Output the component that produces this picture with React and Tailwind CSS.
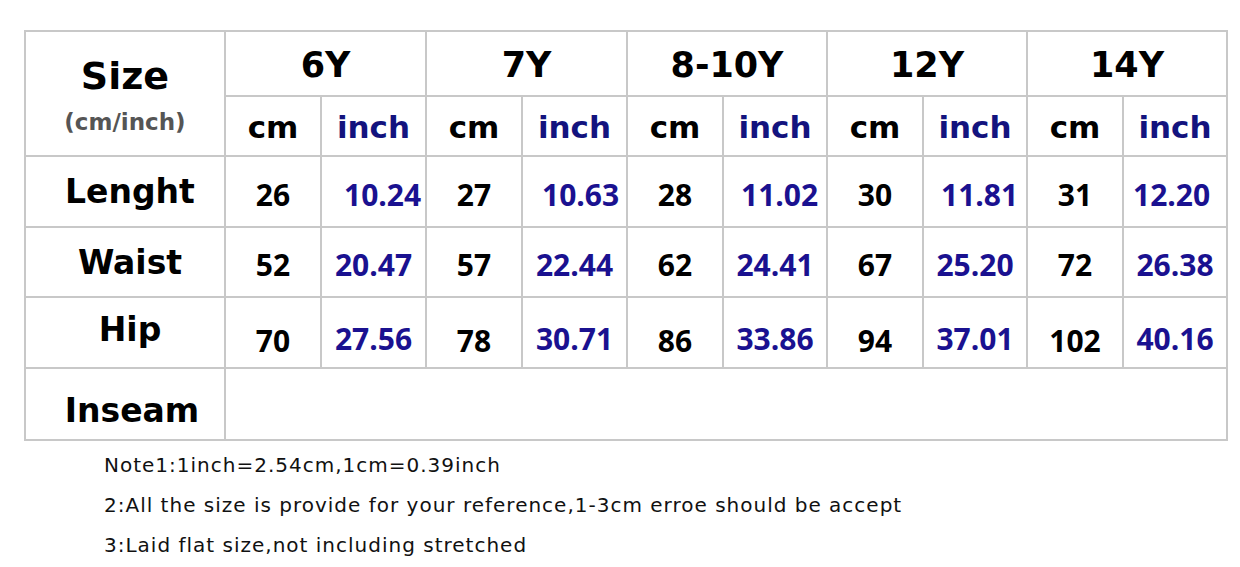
import React from 'react';

const sizes = [
  { label: '6Y', rows: [['26', '10.24'], ['52', '20.47'], ['70', '27.56']] },
  { label: '7Y', rows: [['27', '10.63'], ['57', '22.44'], ['78', '30.71']] },
  { label: '8-10Y', rows: [['28', '11.02'], ['62', '24.41'], ['86', '33.86']] },
  { label: '12Y', rows: [['30', '11.81'], ['67', '25.20'], ['94', '37.01']] },
  { label: '14Y', rows: [['31', '12.20'], ['72', '26.38'], ['102', '40.16']] },
];

const labels = ['Lenght', 'Waist', 'Hip'];

// first row inch values sit a bit to the right in the source picture
const firstRowShift = ['pl-[22px]', 'pl-[19px]', 'pl-[17px]', 'pl-[17px]', 'pl-[9px]'];

const comic = "font-['DejaVu_Sans',sans-serif]";
const num = "font-['Open_Sans',sans-serif] font-bold text-[30px]";

const Cell = ({ className = '', children }) => (
  <div className={`bg-white flex items-center justify-center ${className}`}>{children}</div>
);

export default function App() {
  return (
    <div className="w-[1240px] h-[567px] bg-white overflow-hidden pt-[30px] pl-[24px]">
      <div className="grid grid-cols-[198px_94px_103px_94px_103px_94px_102px_94px_102px_94px_102px] grid-rows-[63px_58px_69px_68px_69px_70px] gap-[2px] p-[2px] bg-[#c8c8c8] w-max">
        {/* Size header */}
        <Cell className="row-span-2 flex-col">
          <span className={`${comic} font-bold text-[38px] leading-none text-black mt-[4px]`}>Size</span>
          <span className={`${comic} font-bold text-[23px] leading-none text-[#555] mt-[16px]`}>(cm/inch)</span>
        </Cell>
        {sizes.map(s => (
          <Cell key={s.label} className="col-span-2 pt-[4px]">
            <span className={`${comic} font-bold text-[35px] leading-none text-black`}>{s.label}</span>
          </Cell>
        ))}
        {sizes.map(s => (
          <React.Fragment key={s.label + '-u'}>
            <Cell className="pt-[2px]">
              <span className={`${comic} font-bold text-[31px] leading-none text-black`}>cm</span>
            </Cell>
            <Cell className="pt-[2px]">
              <span className={`${comic} font-bold text-[31px] leading-none text-[#13137e]`}>inch</span>
            </Cell>
          </React.Fragment>
        ))}

        {labels.map((label, r) => (
          <React.Fragment key={label}>
            <Cell className={`pl-[10px] ${r === 2 ? 'pb-[6px]' : ''}`}>
              <span className={`${comic} font-bold text-[33px] leading-none text-black`}>{label}</span>
            </Cell>
            {sizes.map((s, i) => (
              <React.Fragment key={s.label + label}>
                <Cell className={r === 2 ? 'pt-[16px]' : 'pt-[6px]'}>
                  <span className={`${num} leading-none text-black`}>{s.rows[r][0]}</span>
                </Cell>
                <Cell className={`${r === 0 ? `justify-start ${firstRowShift[i]}` : ''} ${r === 2 ? 'pt-[12px]' : 'pt-[6px]'}`}>
                  <span className={`${num} leading-none text-[#1a1190]`}>{s.rows[r][1]}</span>
                </Cell>
              </React.Fragment>
            ))}
          </React.Fragment>
        ))}

        <Cell className="pl-[14px] pt-[12px]">
          <span className={`${comic} font-bold text-[33px] leading-none text-black`}>Inseam</span>
        </Cell>
        <Cell className="col-span-10" />
      </div>

      <div className={`${comic} text-[20px] tracking-[1px] text-[#111] pl-[80px] pt-[12px] flex flex-col gap-[16px] leading-[24px]`}>
        <p>Note1:1inch=2.54cm,1cm=0.39inch</p>
        <p>2:All the size is provide for your reference,1-3cm erroe should be accept</p>
        <p>3:Laid flat size,not including stretched</p>
      </div>
    </div>
  );
}
